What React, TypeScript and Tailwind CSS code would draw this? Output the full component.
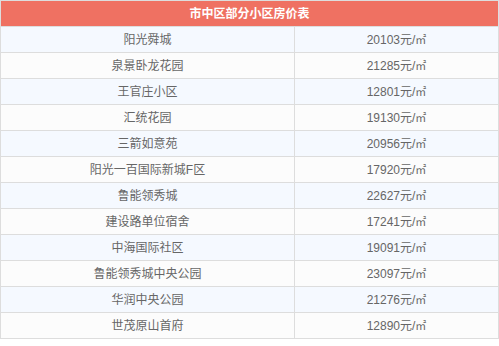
const rows: [string, string][] = [
  ["阳光舜城", "20103"],
  ["泉景卧龙花园", "21285"],
  ["王官庄小区", "12801"],
  ["汇统花园", "19130"],
  ["三箭如意苑", "20956"],
  ["阳光一百国际新城F区", "17920"],
  ["鲁能领秀城", "22627"],
  ["建设路单位宿舍", "17241"],
  ["中海国际社区", "19091"],
  ["鲁能领秀城中央公园", "23097"],
  ["华润中央公园", "21276"],
  ["世茂原山首府", "12890"],
];

export default function App() {
  return (
    <div className="w-[499px] h-[346px] bg-white font-['Liberation_Sans','Noto_Sans_CJK_SC',sans-serif]">
      <table className="w-[499px] border-collapse border border-[#dddddd] text-[12px]">
        <thead>
          <tr>
            <th colSpan={2} className="h-[26px] bg-[#ef7162] text-white font-bold text-center border border-[#dddddd] p-0">
              市中区部分小区房价表
            </th>
          </tr>
        </thead>
        <tbody>
          {rows.map(([name, price], i) => (
            <tr key={name} className={i % 2 === 0 ? "bg-[#f5f9ff]" : "bg-[#fcfcfc]"}>
              <td className="w-[294px] h-[26px] p-0 text-center text-[#666666] border border-[#dddddd]">{name}</td>
              <td className="h-[26px] p-0 text-center text-[#666666] border border-[#dddddd]">
                {price}元/<span className="text-[11px]">㎡</span>
              </td>
            </tr>
          ))}
        </tbody>
      </table>
    </div>
  );
}
